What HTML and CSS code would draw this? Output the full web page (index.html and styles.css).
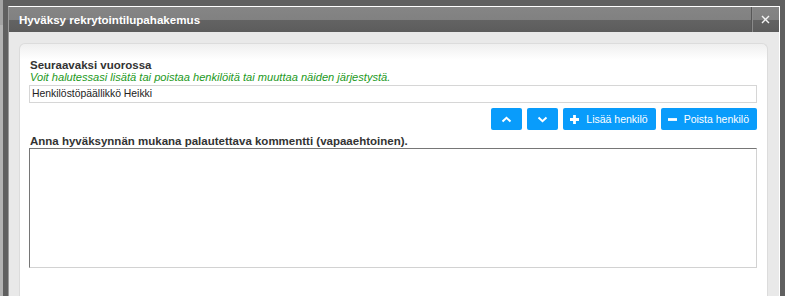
FILE: index.html
```html
<!DOCTYPE html>
<html lang="fi">
<head>
    <meta charset="UTF-8">
    <title>Hyväksy rekrytointilupahakemus</title>
    <link rel="stylesheet" href="styles.css">
</head>
<body>
    <div class="page-edge"></div>
    <div class="dialog">
        <div class="window">
            <div class="titlebar">
                <span class="title">Hyväksy rekrytointilupahakemus</span>
                <button class="close-btn" title="Sulje">
                    <svg width="9" height="9" viewBox="0 0 9 9"><path d="M1 1L8 8M8 1L1 8" stroke="#f4f4f4" stroke-width="1.4"/></svg>
                </button>
            </div>
            <div class="content">
                <div class="panel">
                    <label class="field-label">Seuraavaksi vuorossa</label>
                    <p class="hint">Voit halutessasi lisätä tai poistaa henkilöitä tai muuttaa näiden järjestystä.</p>
                    <div class="person-list">Henkilöstöpäällikkö Heikki</div>

                    <div class="actions">
                        <button class="btn btn-icon" title="Ylös">
                            <svg width="11" height="7" viewBox="0 0 11 7"><path d="M1.5 5.5L5.5 1.8L9.5 5.5" fill="none" stroke="#fff" stroke-width="2"/></svg>
                        </button>
                        <button class="btn btn-icon" title="Alas">
                            <svg width="11" height="7" viewBox="0 0 11 7"><path d="M1.5 1.5L5.5 5.2L9.5 1.5" fill="none" stroke="#fff" stroke-width="2"/></svg>
                        </button>
                        <button class="btn">
                            <svg width="9" height="9" viewBox="0 0 9 9"><path d="M4.5 0V9M0 4.5H9" stroke="#fff" stroke-width="2.8"/></svg>
                            Lisää henkilö
                        </button>
                        <button class="btn">
                            <svg width="9" height="9" viewBox="0 0 9 9"><path d="M0 4.5H9" stroke="#fff" stroke-width="2.8"/></svg>
                            Poista henkilö
                        </button>
                    </div>

                    <label class="field-label field-label-gap">Anna hyväksynnän mukana palautettava kommentti (vapaaehtoinen).</label>
                    <textarea class="comment"></textarea>
                </div>
            </div>
        </div>
    </div>
</body>
</html>
```

FILE: styles.css
```css
* {
    margin: 0;
    padding: 0;
    box-sizing: border-box;
    font-family: "Liberation Sans", Arial, sans-serif;
}

html, body {
    height: 100%;
    overflow: hidden;
}

body {
    display: flex;
    background-color: #606060;
}

.page-edge {
    width: 3px;
    background: #b3b3b3;
    border-top: 25px solid #a4a4a4;
}

.dialog {
    flex: 1;
    display: flex;
    padding: 6px 5px 0 5px;
    background-color: #606060;
}

.window {
    flex: 1;
    display: flex;
    flex-direction: column;
    border: 1px solid #fff;
    border-left-color: #9a9a9a;
    border-bottom: none;
    background-color: #e9e9e9;
}

.titlebar {
    display: flex;
    align-items: stretch;
    height: 25px;
    background: linear-gradient(#858585 0, #818181 50%, #636363 52%, #5c5c5c 100%);
}

.title {
    flex: 1;
    padding-left: 10px;
    line-height: 25px;
    color: #fff;
    font-size: 11.6px;
    font-weight: bold;
}

.close-btn {
    width: 28px;
    border: none;
    border-left: 1px solid #575757;
    box-shadow: inset 1px 0 0 #8a8a8a;
    background: transparent;
    display: flex;
    align-items: center;
    justify-content: center;
    cursor: pointer;
}

.content {
    flex: 1;
    display: flex;
    padding: 11px 11px 0 10px;
}

.panel {
    flex: 1;
    display: flex;
    flex-direction: column;
    padding: 15px 10px 0 9px;
    border: 1px solid #dcdcdc;
    border-bottom: none;
    border-radius: 6px 6px 0 0;
    background: linear-gradient(#efefef 0, #fff 16px);
}

.field-label {
    padding-left: 1px;
    font-size: 11.5px;
    font-weight: bold;
    line-height: 12px;
    color: #333;
}

.field-label-gap {
    margin-top: 4px;
    line-height: 14px;
}

.hint {
    padding-left: 1px;
    font-size: 11.1px;
    font-style: italic;
    line-height: 12px;
    color: #229922;
}

.person-list {
    height: 18px;
    margin-top: 2px;
    padding-left: 2px;
    border: 1px solid #d6d6d6;
    font-size: 10.4px;
    line-height: 16px;
    color: #222;
}

.actions {
    display: flex;
    justify-content: flex-end;
    gap: 5px;
    margin-top: 5px;
}

.btn {
    display: flex;
    align-items: center;
    gap: 7px;
    height: 22px;
    padding: 0 8px 0 7px;
    border: none;
    border-radius: 2px;
    background-color: #099cfb;
    color: #fff;
    font-size: 10.5px;
    cursor: pointer;
}

.btn-icon {
    width: 31px;
    justify-content: center;
    padding: 0;
}

.comment {
    height: 120px;
    border: 1px solid #d2d2d2;
    border-top-color: #767676;
    border-left-color: #767676;
    resize: none;
    outline: none;
}
```
